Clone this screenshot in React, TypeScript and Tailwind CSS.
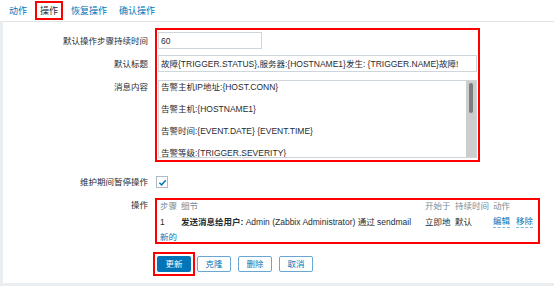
const messageLines = [
  '告警主机IP地址:{HOST.CONN}',
  '',
  '告警主机:{HOSTNAME1}',
  '',
  '告警时间:{EVENT.DATE} {EVENT.TIME}',
  '',
  '告警等级:{TRIGGER.SEVERITY}',
];

function Tab({ label, active, className = '' }: { label: string; active?: boolean; className?: string }) {
  if (active) {
    return (
      <a className={`flex h-[19px] items-center border-2 border-[#ff0000] px-[3px] text-[#1f2c33] ${className}`}>
        {label}
      </a>
    );
  }
  return <a className={`flex h-[19px] items-center text-[#0275b8] ${className}`}>{label}</a>;
}

export default function App() {
  return (
    <div className="h-[286px] w-full overflow-hidden bg-[#ebeef0] font-['Liberation_Sans','Noto_Sans_CJK_SC',sans-serif] text-[8.5px] leading-[12px] text-[#1f2c33]">
      <nav className="flex h-[21px] items-start bg-white pl-[9px] pt-[1px] text-[9px]">
        <Tab label="动作" />
        <Tab label="操作" active className="ml-[8px]" />
        <Tab label="恢复操作" className="ml-[8px]" />
        <Tab label="确认操作" className="ml-[12px]" />
      </nav>

      <div className="pl-[3px]">
        <div className="h-[262px] border-t border-[#dfe4e7] bg-white pt-[6px]">
          {/* duration / subject / message */}
          <div className="flex">
            <div className="w-[145px] shrink-0 pt-[4px] text-right">
              <div className="flex h-[17px] items-center justify-end">默认操作步骤持续时间</div>
              <div className="mt-[6px] flex h-[17px] items-center justify-end">默认标题</div>
              <div className="mt-[8px] pt-[2px] leading-[11px]">消息内容</div>
            </div>
            <div className="ml-[7px] w-[325px] border-2 border-[#ff0000] py-[2px] pl-[1px]">
              <div className="flex h-[17px] w-[104px] items-center border border-[#cfd6db] px-[2px]">60</div>
              <div className="mt-[6px] flex h-[17px] w-[319px] items-center overflow-hidden whitespace-nowrap border border-[#cfd6db] px-[2px]">
                故障{'{TRIGGER.STATUS}'},服务器:{'{HOSTNAME1}'}发生: {'{TRIGGER.NAME}'}故障!
              </div>
              <div className="mt-[8px] flex h-[78px] w-[319px] border border-[#cfd6db]">
                <div className="flex-1 overflow-hidden pl-[2px] pt-[1px] leading-[11px]">
                  {messageLines.map((line, i) => (
                    <div key={i} className="h-[11px] whitespace-nowrap">
                      {line}
                    </div>
                  ))}
                </div>
                <div className="flex w-[10px] flex-col items-center bg-[#cdcdcd] pt-[2px]">
                  <div className="h-[30px] w-[4px] rounded-[2px] bg-[#7d7d7d]" />
                </div>
              </div>
            </div>
          </div>

          {/* pause during maintenance */}
          <div className="mt-[14px] flex">
            <div className="flex h-[12px] w-[145px] shrink-0 items-center justify-end">维护期间暂停操作</div>
            <div className="ml-[8px] flex h-[12px] w-[12px] items-center justify-center border border-[#acbbc2] bg-white">
              <svg width="9" height="9" viewBox="0 0 10 10">
                <polyline points="1.5,5.2 4,7.6 8.6,2.4" fill="none" stroke="#0275b8" strokeWidth="1.6" />
              </svg>
            </div>
          </div>

          {/* operations */}
          <div className="mt-[10px] flex">
            <div className="w-[145px] shrink-0 pt-[2px] text-right leading-[11px]">操作</div>
            <div className="ml-[7px] w-[385px] border-2 border-[#ff0000] pl-[3px]">
              <div className="grid grid-cols-[21px_244px_30px_38px_1fr] items-center">
                <div className="flex h-[12px] items-center text-[#768d99]">步骤</div>
                <div className="text-[#768d99]">细节</div>
                <div className="whitespace-nowrap text-[#768d99]">开始于</div>
                <div className="whitespace-nowrap text-[#768d99]">持续时间</div>
                <div className="text-[#768d99]">动作</div>

                <div className="flex h-[20px] items-center">1</div>
                <div className="whitespace-nowrap">
                  <span className="font-bold">发送消息给用户:</span> Admin (Zabbix Administrator) 通过 sendmail
                </div>
                <div className="whitespace-nowrap">立即地</div>
                <div>默认</div>
                <div className="flex gap-[6px]">
                  <a className="border-b border-dashed border-[#7fb3d9] leading-[11px] text-[#0275b8]">编辑</a>
                  <a className="border-b border-dashed border-[#7fb3d9] leading-[11px] text-[#0275b8]">移除</a>
                </div>
              </div>
              <div className="h-[10px] leading-[10px] text-[#0275b8]">新的</div>
            </div>
          </div>

          {/* buttons */}
          <div className="ml-[150px] mt-[8px] flex items-center">
            <div className="border-2 border-[#ff0000] p-[2px]">
              <button className="flex h-[16px] w-[34px] items-center justify-center rounded-[2px] bg-[#0275b8] text-white">
                更新
              </button>
            </div>
            <button className="ml-[2px] flex h-[16px] w-[34px] items-center justify-center rounded-[2px] border border-[#6aa6d3] bg-white text-[#0275b8]">
              克隆
            </button>
            <button className="ml-[7px] flex h-[16px] w-[34px] items-center justify-center rounded-[2px] border border-[#6aa6d3] bg-white text-[#0275b8]">
              删除
            </button>
            <button className="ml-[7px] flex h-[16px] w-[34px] items-center justify-center rounded-[2px] border border-[#6aa6d3] bg-white text-[#0275b8]">
              取消
            </button>
          </div>
        </div>
      </div>
    </div>
  );
}
